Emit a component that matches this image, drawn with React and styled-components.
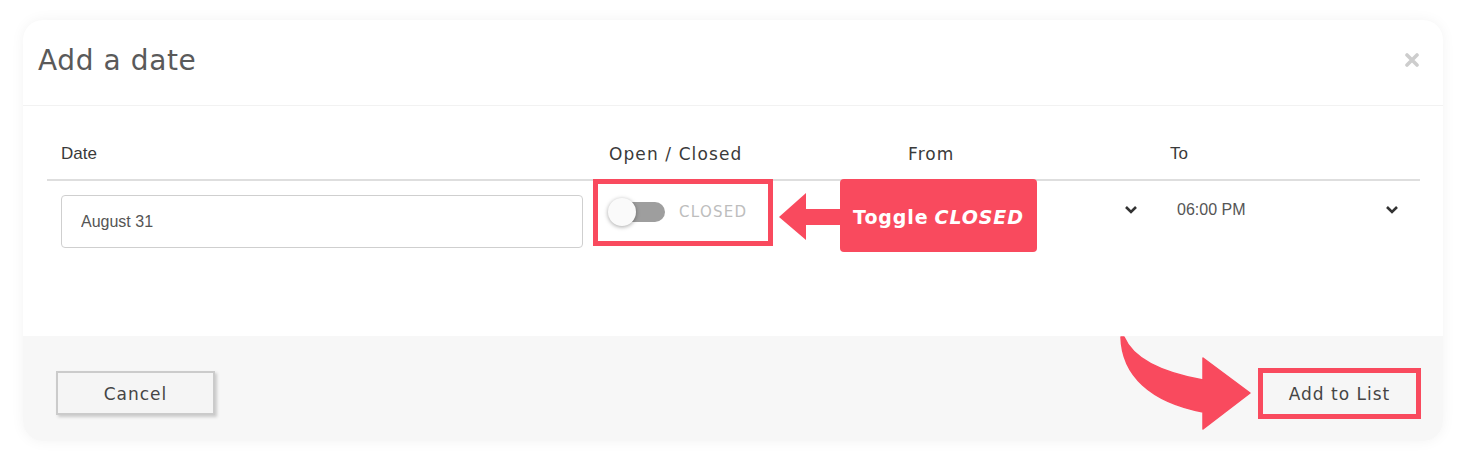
import React from 'react'
import styled, { createGlobalStyle } from 'styled-components'

const RED = '#f94a5e'
const GEO = "'DejaVu Sans', 'Open Sans', sans-serif"
const ARIAL = "'Liberation Sans', Arial, sans-serif"

const GlobalStyle = createGlobalStyle`
  body {
    margin: 0;
    background: #ffffff;
    font-family: ${GEO};
  }
`

const Page = styled.div`
  position: relative;
  width: 1464px;
  height: 461px;
  padding: 20px 21px 20px 23px;
  box-sizing: border-box;
`

const Modal = styled.div`
  width: 1420px;
  height: 421px;
  background: #fff;
  border-radius: 20px;
  box-shadow: 0 0 14px rgba(0, 0, 0, 0.05);
  display: flex;
  flex-direction: column;
  overflow: hidden;
`

const Header = styled.div`
  height: 86px;
  flex-shrink: 0;
  display: flex;
  align-items: center;
  justify-content: space-between;
  padding: 0 24px 4px 15px;
  box-sizing: border-box;
  border-bottom: 1px solid #f2f2f2;
`

const Title = styled.h2`
  margin: 0;
  font-family: ${GEO};
  font-size: 28px;
  font-weight: 400;
  letter-spacing: 0.6px;
  color: #5a5a5a;
`

const Close = styled.button`
  border: 0;
  background: none;
  padding: 0;
  margin-bottom: 2px;
  display: flex;
  cursor: pointer;
`

const Body = styled.div`
  flex: 1;
  padding: 0 23px 0 24px;
`

const Grid = styled.div`
  display: grid;
  grid-template-columns: 548px 299px 262px 1fr;
`

const HeadRow = styled(Grid)`
  border-bottom: 2px solid #dedede;
`

const HeadCell = styled.div`
  padding: 38px 14px 15px;
  font-size: 17px;
  line-height: 20px;
  color: #3a3a3a;
  font-family: ${({ $arial }) => ($arial ? ARIAL : GEO)};
  letter-spacing: ${({ $arial }) => ($arial ? '0' : '1.1px')};
`

const Cell = styled.div`
  position: relative;
  padding: 14px 14px 0;
`

const DateInput = styled.input`
  width: 522px;
  height: 53px;
  box-sizing: border-box;
  border: 1px solid #cfcfcf;
  border-radius: 4px;
  padding: 0 19px;
  font-family: ${ARIAL};
  font-size: 16px;
  color: #555;
  outline: none;
`

const ToggleBox = styled.div`
  position: absolute;
  left: -2px;
  top: -2px;
  width: 180px;
  height: 67px;
  box-sizing: border-box;
  border: 5px solid ${RED};
  display: flex;
  align-items: center;
  padding: 0 0 2px 14px;
  gap: 14px;
`

const Track = styled.div`
  position: relative;
  width: 53px;
  height: 20px;
  border-radius: 10px;
  background: #9e9e9e;
`

const Knob = styled.div`
  position: absolute;
  left: -4px;
  top: -4px;
  width: 28px;
  height: 28px;
  border-radius: 50%;
  background: #fafafa;
  box-shadow: 0 1px 4px rgba(0, 0, 0, 0.35);
`

const ToggleLabel = styled.span`
  font-size: 15px;
  color: #bdbdbd;
  letter-spacing: 1.3px;
`

const SelectBox = styled.div`
  height: 30px;
  display: flex;
  align-items: center;
  justify-content: space-between;
  padding: 0 ${({ $pr }) => $pr}px 0 7px;
  font-family: ${ARIAL};
  font-size: 16px;
  color: #555;
`

const Footer = styled.div`
  height: 105px;
  flex-shrink: 0;
  box-sizing: border-box;
  background: #f7f7f7;
  display: flex;
  align-items: center;
  justify-content: space-between;
  padding: 9px 22px 0 33px;
`

const Button = styled.button`
  width: ${({ $w }) => $w}px;
  height: ${({ $h }) => $h}px;
  box-sizing: border-box;
  border: ${({ $mark }) => ($mark ? `5px solid ${RED}` : '2px solid #cbcbcb')};
  background: ${({ $mark }) => ($mark ? '#f6f6f6' : '#f5f5f5')};
  box-shadow: ${({ $mark }) => ($mark ? 'none' : '2px 2px 3px rgba(0,0,0,0.18)')};
  font-family: ${GEO};
  font-size: 17px;
  letter-spacing: 1px;
  padding-top: 2px;
  color: #454545;
  cursor: pointer;
`

const Callout = styled.div`
  position: absolute;
  left: 778px;
  top: 179px;
  display: flex;
  align-items: center;
`

const CalloutBox = styled.div`
  width: 197px;
  height: 73px;
  border-radius: 4px;
  background: ${RED};
  color: #fff;
  display: flex;
  align-items: center;
  justify-content: center;
  font-family: ${GEO};
  font-weight: 700;
  font-size: 19px;
  letter-spacing: 0.9px;
  padding-top: 2px;
  box-sizing: border-box;
  em { font-style: italic; margin-left: 6px; }
`

const CurveArrow = styled.svg`
  position: absolute;
  left: 1110px;
  top: 330px;
`

const Chevron = () => (
  <svg width="14" height="10" viewBox="0 0 14 10">
    <polyline points="2,2 7,7 12,2" fill="none" stroke="#333" strokeWidth="2.6" />
  </svg>
)

export default function App() {
  return (
    <>
      <GlobalStyle />
      <Page>
        <Modal>
          <Header>
            <Title>Add a date</Title>
            <Close aria-label="close">
              <svg width="14" height="14" viewBox="0 0 14 14">
                <path d="M2 2 L12 12 M12 2 L2 12" stroke="#cdcdcd" strokeWidth="3.6" strokeLinecap="round" />
              </svg>
            </Close>
          </Header>
          <Body>
            <HeadRow>
              <HeadCell $arial>Date</HeadCell>
              <HeadCell>Open / Closed</HeadCell>
              <HeadCell>From</HeadCell>
              <HeadCell $arial>To</HeadCell>
            </HeadRow>
            <Grid>
              <Cell>
                <DateInput defaultValue="August 31" />
              </Cell>
              <Cell>
                <ToggleBox>
                  <Track>
                    <Knob />
                  </Track>
                  <ToggleLabel>CLOSED</ToggleLabel>
                </ToggleBox>
              </Cell>
              <Cell>
                <SelectBox $pr={4}>
                  <span />
                  <Chevron />
                </SelectBox>
              </Cell>
              <Cell>
                <SelectBox $pr={7}>
                  <span>06:00 PM</span>
                  <Chevron />
                </SelectBox>
              </Cell>
            </Grid>
          </Body>
          <Footer>
            <Button $w={159} $h={44}>Cancel</Button>
            <Button $w={163} $h={51} $mark>Add to List</Button>
          </Footer>
        </Modal>

        <Callout>
          <svg width="62" height="50" viewBox="0 0 62 50">
            <path d="M1 26 L28 2 L28 18 L62 18 L62 34 L28 34 L28 49 Z" fill={RED} strokeLinejoin="round" />
          </svg>
          <CalloutBox>
            Toggle<em>CLOSED</em>
          </CalloutBox>
        </Callout>

        <CurveArrow width="150" height="105" viewBox="0 0 150 105">
          <path
            d="M11 7 L14 7 Q27 38 93 50 L93 28 L140 63 L93 99 L93 82 C40 72 12 45 11 7 Z"
            fill={RED}
            stroke={RED}
            strokeWidth="1.5"
            strokeLinejoin="round"
          />
        </CurveArrow>
      </Page>
    </>
  )
}
